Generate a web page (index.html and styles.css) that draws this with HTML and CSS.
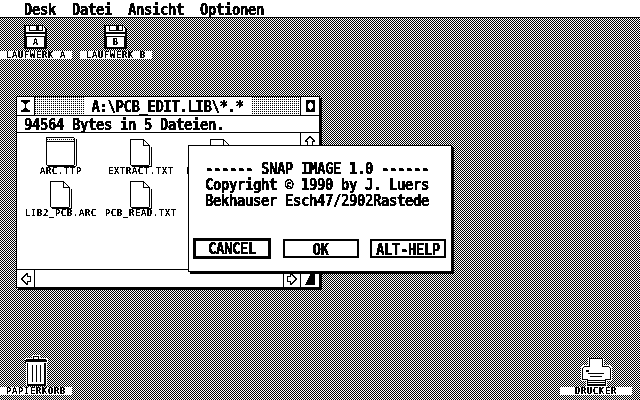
FILE: index.html

```html
<!DOCTYPE html>
<html lang="de">
<head>
    <meta charset="UTF-8">
    <title>GEM Desktop</title>
    <link rel="stylesheet" href="styles.css">
</head>
<body>

<div class="screen">
    <!-- Menuleiste -->
    <div class="menubar">
        <span class="menu-item tall">Desk</span>
        <span class="menu-item tall">Datei</span>
        <span class="menu-item tall">Ansicht</span>
        <span class="menu-item tall">Optionen</span>
    </div>

    <div class="desktop">
        <!-- Laufwerke -->
        <div class="desk-icon drive-a">
            <svg class="icon-svg" width="24" height="25" viewBox="0 0 24 25">
                <path d="M0 0H20V1H21V2H22V3H23V24H0Z" fill="#000"/>
                <rect x="2" y="1" width="18" height="11" fill="#fff"/>
                <rect x="20" y="3" width="1" height="19" fill="#fff"/>
                <rect x="5" y="0" width="14" height="6" fill="#000"/>
                <rect x="6" y="1" width="12" height="4" fill="#fff"/>
                <rect x="12" y="1" width="3" height="4" fill="#000"/>
                <rect x="2" y="7" width="19" height="2" fill="#000"/>
                <rect x="2" y="11" width="19" height="11" fill="#000"/>
                <rect x="3" y="12" width="17" height="10" fill="#fff"/>
                <text class="disk-letter" x="11.5" y="20" text-anchor="middle">A</text>
            </svg>
            <div class="desk-label">LAUFWERK A</div>
        </div>
        <div class="desk-icon drive-b">
            <svg class="icon-svg" width="24" height="25" viewBox="0 0 24 25">
                <path d="M0 0H20V1H21V2H22V3H23V24H0Z" fill="#000"/>
                <rect x="2" y="1" width="18" height="11" fill="#fff"/>
                <rect x="20" y="3" width="1" height="19" fill="#fff"/>
                <rect x="5" y="0" width="14" height="6" fill="#000"/>
                <rect x="6" y="1" width="12" height="4" fill="#fff"/>
                <rect x="12" y="1" width="3" height="4" fill="#000"/>
                <rect x="2" y="7" width="19" height="2" fill="#000"/>
                <rect x="2" y="11" width="19" height="11" fill="#000"/>
                <rect x="3" y="12" width="17" height="10" fill="#fff"/>
                <text class="disk-letter" x="11.5" y="20" text-anchor="middle">B</text>
            </svg>
            <div class="desk-label">LAUFWERK B</div>
        </div>

        <!-- Papierkorb -->
        <div class="desk-icon trash">
            <svg class="icon-svg" width="26" height="31" viewBox="0 0 26 31">
                <path d="M9 0H17V3H24V4H25V8H24V31H3V8H2V4H3V3H9Z" fill="#fff"/>
                <path d="M10 1H16V4H10Z M3 4H23V5H24V7H3V8H2V5H3Z" fill="#000"/>
                <rect x="11" y="2" width="4" height="2" fill="#fff"/>
                <rect x="4" y="8" width="1" height="21" fill="#000"/>
                <rect x="21" y="8" width="2" height="21" fill="#000"/>
                <rect x="9" y="10" width="1" height="17" fill="#000"/>
                <rect x="13" y="10" width="1" height="17" fill="#000"/>
                <rect x="17" y="10" width="1" height="17" fill="#000"/>
                <rect x="4" y="29" width="19" height="2" fill="#000"/>
            </svg>
            <div class="desk-label">PAPIERKORB</div>
        </div>

        <!-- Drucker -->
        <div class="desk-icon printer">
            <svg class="icon-svg" width="32" height="29" viewBox="0 0 32 29">
                <path d="M8 0H24V7H30V8H31V9H32V23H27V29H6V23H1V9H2V7H8Z" fill="#fff"/>
                <path d="M9 0H23V8H29V9H30V10H31V22H26V28H7V22H2V10H3V9H4V8H9Z" fill="#000"/>
                <rect x="10" y="1" width="12" height="8" fill="#fff"/>
                <rect x="4" y="9" width="25" height="1" fill="#fff"/>
                <rect x="3" y="10" width="27" height="11" fill="#fff"/>
                <rect x="6" y="12" width="3" height="2" fill="#000"/>
                <rect x="8" y="15" width="16" height="1" fill="#000"/>
                <rect x="10" y="18" width="12" height="1" fill="#000"/>
                <rect x="8" y="20" width="17" height="7" fill="#fff"/>
                <rect x="8" y="22" width="17" height="1" fill="#000"/>
                <rect x="8" y="24" width="17" height="1" fill="#000"/>
                <rect x="7" y="26" width="19" height="1" fill="#000"/>
            </svg>
            <div class="desk-label">DRUCKER</div>
        </div>

        <!-- Verzeichnisfenster -->
        <div class="window">
            <div class="title-row">
                <div class="box close-box">
                    <svg class="icon-svg" width="9" height="12" viewBox="0 0 9 12">
                        <path d="M0 0H9V2H7V3H6V4H5V8H6V9H7V10H9V12H0V10H2V9H3V8H4V4H3V3H2V2H0Z" fill="#000"/>
                    </svg>
                </div>
                <div class="title-fill"></div>
                <div class="title-text"><span class="tall">A:\PCB_EDIT.LIB\*.*</span></div>
                <div class="title-fill"></div>
                <div class="box full-box">
                    <svg class="icon-svg" width="9" height="12" viewBox="0 0 9 12">
                        <path d="M0 0H9V12H0Z M4 2H5V3H6V4H7V8H6V9H5V10H4V9H3V8H2V4H3V3H4Z" fill="#000" fill-rule="evenodd"/>
                    </svg>
                </div>
            </div>
            <div class="info-row"><span class="tall">94564 Bytes in 5 Dateien.</span></div>
            <div class="window-main">
                <div class="file-area">
                    <div class="file-item file-arc">
                        <svg class="icon-svg" width="32" height="30" viewBox="0 0 32 30">
                            <defs>
                                <pattern id="strip" width="2" height="2" patternUnits="userSpaceOnUse">
                                    <rect width="2" height="2" fill="#fff"/>
                                    <rect width="1" height="1" fill="#000"/>
                                </pattern>
                            </defs>
                            <path d="M1 0H29V1H30V28H29V29H2V28H1Z" fill="#000"/>
                            <rect x="31" y="2" width="1" height="27" fill="#000"/>
                            <rect x="3" y="29" width="28" height="1" fill="#000"/>
                            <rect x="2" y="1" width="27" height="3" fill="url(#strip)"/>
                            <rect x="2" y="5" width="27" height="23" fill="#fff"/>
                        </svg>
                        <div class="file-label">ARC.TTP</div>
                    </div>
                    <div class="file-item file-extract">
                        <svg class="icon-svg" width="24" height="28" viewBox="0 0 24 28">
                            <path d="M1 0H15V1H16V2H17V3H18V4H19V5H20V6H21V26H20V27H2V26H1Z" fill="#000"/>
                            <path d="M2 1H14V7H20V26H2Z" fill="#fff"/>
                            <path d="M15 2H16V3H17V4H18V5H19V6H15Z" fill="#fff"/>
                            <rect x="22" y="8" width="1" height="19" fill="#000"/>
                            <rect x="3" y="27" width="20" height="1" fill="#000"/>
                        </svg>
                        <div class="file-label">EXTRACT.TXT</div>
                    </div>
                    <div class="file-item file-third">
                        <svg class="icon-svg" width="24" height="28" viewBox="0 0 24 28">
                            <path d="M1 0H15V1H16V2H17V3H18V4H19V5H20V6H21V26H20V27H2V26H1Z" fill="#000"/>
                            <path d="M2 1H14V7H20V26H2Z" fill="#fff"/>
                            <path d="M15 2H16V3H17V4H18V5H19V6H15Z" fill="#fff"/>
                        </svg>
                        <div class="file-label label-cut">L</div>
                    </div>
                    <div class="file-item file-lib">
                        <svg class="icon-svg" width="24" height="28" viewBox="0 0 24 28">
                            <path d="M1 0H15V1H16V2H17V3H18V4H19V5H20V6H21V26H20V27H2V26H1Z" fill="#000"/>
                            <path d="M2 1H14V7H20V26H2Z" fill="#fff"/>
                            <path d="M15 2H16V3H17V4H18V5H19V6H15Z" fill="#fff"/>
                            <rect x="22" y="8" width="1" height="19" fill="#000"/>
                            <rect x="3" y="27" width="20" height="1" fill="#000"/>
                        </svg>
                        <div class="file-label">LIB2_PCB.ARC</div>
                    </div>
                    <div class="file-item file-read">
                        <svg class="icon-svg" width="24" height="28" viewBox="0 0 24 28">
                            <path d="M1 0H15V1H16V2H17V3H18V4H19V5H20V6H21V26H20V27H2V26H1Z" fill="#000"/>
                            <path d="M2 1H14V7H20V26H2Z" fill="#fff"/>
                            <path d="M15 2H16V3H17V4H18V5H19V6H15Z" fill="#fff"/>
                            <rect x="22" y="8" width="1" height="19" fill="#000"/>
                            <rect x="3" y="27" width="20" height="1" fill="#000"/>
                        </svg>
                        <div class="file-label">PCB_READ.TXT</div>
                    </div>
                </div>
                <div class="v-scroll">
                    <div class="box arrow-box">
                        <svg class="icon-svg" width="12" height="11" viewBox="0 0 12 11">
                            <path d="M5 0H7V1H8V2H9V3H10V4H11V6H9V10H3V6H1V4H2V3H3V2H4V1H5Z" fill="#000"/>
                            <path d="M5 2H7V3H8V4H9V5H8V9H4V5H3V4H4V3H5Z" fill="#fff"/>
                        </svg>
                    </div>
                </div>
            </div>
            <div class="h-scroll">
                <div class="box arrow-box side-box">
                    <svg class="icon-svg" width="10" height="12" viewBox="0 0 10 12">
                        <path d="M5 0H7V3H10V9H7V12H5V11H4V10H3V9H2V8H1V7H0V5H1V4H2V3H3V2H4V1H5Z" fill="#000"/>
                        <path d="M5 2H6V4H9V8H6V10H5V9H4V8H3V7H2V5H3V4H4V3H5Z" fill="#fff"/>
                    </svg>
                </div>
                <div class="h-track"></div>
                <div class="box arrow-box side-box right-arrow">
                    <svg class="icon-svg" width="10" height="12" viewBox="0 0 10 12">
                        <path d="M3 0H5V1H6V2H7V3H8V4H9V5H10V7H9V8H8V9H7V10H6V11H5V12H3V9H0V3H3Z" fill="#000"/>
                        <path d="M4 2H5V3H6V4H7V5H8V7H7V8H6V9H5V10H4V8H1V4H4Z" fill="#fff"/>
                    </svg>
                </div>
                <div class="box size-box">
                    <svg class="icon-svg" width="10" height="12" viewBox="0 0 10 12">
                        <path d="M5 0H10V12H0V11H1V9H2V7H3V5H4V3H5Z" fill="#000"/>
                    </svg>
                </div>
            </div>
        </div>

        <!-- Dialog -->
        <div class="dialog">
            <div class="dialog-text">
                <div class="tall">------ SNAP IMAGE 1.0 ------</div>
                <div class="tall">Copyright © 1990 by J. Luers</div>
                <div class="tall">Bekhauser Esch47/2902Rastede</div>
            </div>
            <div class="dialog-buttons">
                <div class="btn btn-default"><span class="tall">CANCEL</span></div>
                <div class="btn"><span class="tall">OK</span></div>
                <div class="btn"><span class="tall">ALT-HELP</span></div>
            </div>
        </div>
    </div>
</div>

</body>
</html>
```

FILE: styles.css

```css
* {
    box-sizing: border-box;
}
html, body {
    margin: 0;
    padding: 0;
    background: #fff;
}
body {
    width: 640px;
    height: 400px;
    overflow: hidden;
}

/* alles wird hart auf schwarz/weiss gezogen, wie am ST Monitor */
.screen {
    width: 640px;
    height: 400px;
    display: flex;
    flex-direction: column;
    font-family: "DejaVu Sans Mono", monospace;
    font-weight: bold;
    font-size: 14px;
    letter-spacing: -0.43px;
    color: #000;
    filter: grayscale(1) brightness(0.65) contrast(40);
}

/* der Systemfont ist schmal und hoch */
.tall {
    display: inline-block;
    transform: scaleY(1.15);
}
.dialog-text .tall {
    display: block;
    line-height: 13px;
}

.menubar {
    height: 18px;
    flex: none;
    display: flex;
    gap: 16px;
    padding-left: 24px;
    background: #fff;
    border-bottom: 1px solid #000;
    line-height: 19px;
}

.desktop {
    position: relative;
    flex: 1;
    background-color: #fff;
    background-image: url("data:image/svg+xml,%3Csvg xmlns='http://www.w3.org/2000/svg' width='2' height='2' shape-rendering='crispEdges'%3E%3Crect width='1' height='1'/%3E%3Crect x='1' y='1' width='1' height='1'/%3E%3C/svg%3E");
    background-size: 2px 2px;
}

/* Icons auf dem Desktop */
.desk-icon {
    position: absolute;
    width: 72px;
    display: flex;
    flex-direction: column;
    align-items: center;
}
.drive-a { left: 0; top: 7px; }
.drive-b { left: 80px; top: 7px; }
.trash { left: 0; top: 337px; }
.printer { left: 560px; top: 340px; }
.printer .desk-label { margin-top: 0; }

.icon-svg {
    display: block;
    shape-rendering: crispEdges;
}
.disk-letter {
    font-family: "DejaVu Sans Mono", monospace;
    font-size: 8px;
    font-weight: normal;
    letter-spacing: 0;
}
.desk-label, .file-label {
    font-family: "DejaVu Sans Mono", monospace;
    font-weight: normal;
    font-size: 8.5px;
    letter-spacing: 0.88px;
    text-align: center;
    white-space: nowrap;
}
.desk-label {
    width: 72px;
    height: 8px;
    line-height: 8px;
    margin-top: 1px;
    background: #fff;
}

/* Fenster */
.window {
    position: absolute;
    left: 16px;
    top: 78px;
    width: 304px;
    height: 192px;
    display: flex;
    flex-direction: column;
    background: #fff;
    border: 1px solid #000;
    box-shadow: 2px 2px 0 #000;
}
.title-row {
    display: flex;
    height: 19px;
    flex: none;
    border-bottom: 1px solid #000;
}
.box {
    display: flex;
    align-items: center;
    justify-content: center;
    background: #fff;
}
.close-box {
    width: 18px;
    border-right: 1px solid #000;
}
.full-box {
    width: 19px;
    border-left: 1px solid #000;
}
.title-fill {
    flex: 1;
    background-color: #fff;
    background-image: url("data:image/svg+xml,%3Csvg xmlns='http://www.w3.org/2000/svg' width='2' height='2' shape-rendering='crispEdges'%3E%3Crect width='1' height='1'/%3E%3C/svg%3E");
    background-size: 2px 2px;
}
.title-text {
    width: 168px;
    text-align: center;
    line-height: 18px;
}
.info-row {
    height: 17px;
    flex: none;
    padding-left: 7px;
    line-height: 17px;
    border-bottom: 1px solid #000;
}
.window-main {
    flex: 1;
    display: flex;
    min-height: 0;
}
.file-area {
    position: relative;
    flex: 1;
    overflow: hidden;
}
.v-scroll {
    width: 19px;
    flex: none;
    border-left: 1px solid #000;
}
.arrow-box {
    height: 18px;
    border-bottom: 1px solid #000;
}
.h-scroll {
    display: flex;
    height: 18px;
    flex: none;
    border-top: 1px solid #000;
}
.side-box {
    width: 18px;
    height: auto;
    border-bottom: 0;
    border-right: 1px solid #000;
}
.h-track {
    flex: 1;
}
.right-arrow {
    width: 17px;
    border-left: 1px solid #000;
    border-right: 0;
}
.size-box {
    width: 19px;
    border-left: 1px solid #000;
}

/* Dateien im Fenster, Abstaende wie im Original-Raster */
.file-item {
    position: absolute;
    width: 80px;
    display: flex;
    flex-direction: column;
    align-items: center;
}
.file-label {
    height: 7px;
    line-height: 7px;
    margin-top: 1px;
}
.label-cut {
    width: 72px;
    padding-left: 1px;
    text-align: left;
}
.file-arc { left: 4px; top: 4px; }
.file-extract { left: 84px; top: 6px; }
.file-lib { left: 4px; top: 48px; }
.file-read { left: 84px; top: 48px; }
.file-third { left: 164px; top: 6px; }

/* Dialogbox */
.dialog {
    position: absolute;
    left: 188px;
    top: 127px;
    width: 264px;
    height: 127px;
    display: flex;
    flex-direction: column;
    justify-content: space-between;
    padding: 16px 5px 12px 4px;
    background: #fff;
    border: 1px solid #000;
    box-shadow: 2px 2px 0 #000;
}
.dialog-text {
    display: flex;
    flex-direction: column;
    gap: 3px;
    padding-left: 12px;
    white-space: nowrap;
}
.dialog-buttons {
    display: flex;
    justify-content: space-between;
    align-items: center;
}
.btn {
    width: 76px;
    height: 19px;
    line-height: 16px;
    text-align: center;
    border: 2px solid #000;
}
.btn-default {
    width: 78px;
    height: 21px;
    line-height: 15px;
    border-width: 3px;
}
```
